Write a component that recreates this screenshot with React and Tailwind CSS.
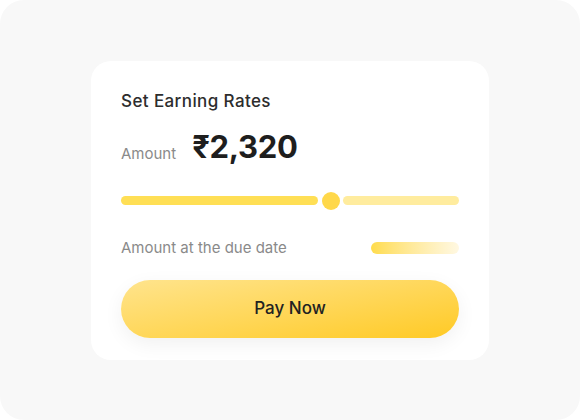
import React from "react";

export default function App() {
  return (
    <div className="w-[580px] h-[420px] bg-white">
      <div
        className="w-[580px] h-[420px] bg-[#f8f8f8] rounded-[24px] flex items-center justify-center"
        style={{ fontFamily: "Inter, 'Noto Sans', 'DejaVu Sans', sans-serif" }}
      >
        <div className="w-[398px] h-[299px] bg-white rounded-[20px] px-[30px] pt-[28px] flex flex-col">
          <div className="text-[17px] leading-[24px] font-medium text-[#2d2d2d] tracking-[0.4px]">
            Set Earning Rates
          </div>
          <div className="flex items-end mt-[14px] h-[40px]">
            <span className="text-[15px] leading-[20px] text-[#8a8a8a] mb-[3px]">Amount</span>
            <span className="ml-[16px] text-[31px] leading-[40px] font-bold text-[#1e1e1e] tracking-[-0.3px]">
              ₹2,320
            </span>
          </div>
          <div className="relative mt-[25px] h-[18px] flex items-center">
            <div className="w-[197px] h-[9px] rounded-full bg-[#ffdf55]" />
            <div className="ml-[25px] flex-1 h-[9px] rounded-full bg-[#ffec9e]" />
            <div className="absolute left-[201px] top-0 w-[18px] h-[18px] rounded-full bg-[#ffd84a]" />
          </div>
          <div className="flex items-center justify-between mt-[28px]">
            <span className="text-[15px] leading-[20px] text-[#8a8a8a]">Amount at the due date</span>
            <div className="w-[88px] h-[12px] rounded-full bg-gradient-to-r from-[#ffdc4a] to-[#fff8e2]" />
          </div>
          <div className="mt-[22px] h-[58px] rounded-full bg-[linear-gradient(170deg,#ffe48d_0%,#ffd655_55%,#ffca25_100%)] shadow-[0_6px_20px_rgba(0,0,0,0.06)] flex items-center justify-center">
            <span className="text-[17px] font-medium text-[#222]">Pay Now</span>
          </div>
        </div>
      </div>
    </div>
  );
}
